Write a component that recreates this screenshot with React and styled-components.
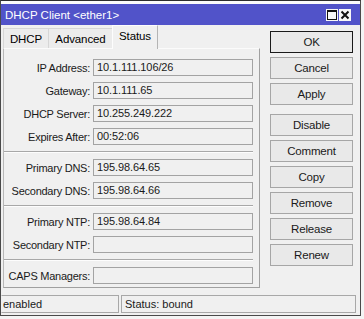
import React from "react";
import styled, { createGlobalStyle } from "styled-components";

const GlobalStyle = createGlobalStyle`
  body {
    margin: 0;
    background: #f4f4f4;
    font-family: "Liberation Sans", Arial, sans-serif;
  }
`;

const Window = styled.div`
  width: 361px;
  height: 316px;
  box-sizing: border-box;
  border: 1px solid #4a4a4a;
  border-top-color: #2e2e2e;
  background: #f0f0f0;
  display: flex;
  flex-direction: column;
  font-size: 11px;
  color: #000;
`;

const TopGap = styled.div`
  height: 3px;
  background: #fbfbfb;
`;

const TitleBar = styled.div`
  height: 21px;
  background: #5153c9;
  display: flex;
  align-items: center;
  padding: 0 9px 0 4px;
  color: #fff;
  font-size: 11.5px;
`;

const TitleText = styled.div`
  flex: 1;
  padding-top: 1px;
`;

const TitleButtons = styled.div`
  display: flex;
  gap: 1px;
`;

const TitleButton = styled.div`
  width: 12px;
  height: 12px;
  background: #f7f7f7;
  display: flex;
  align-items: center;
  justify-content: center;
`;

const Body = styled.div`
  display: flex;
  gap: 10px;
  padding: 0 7px 0 2px;
  height: 263px;
`;

const LeftColumn = styled.div`
  width: 257px;
  display: flex;
  flex-direction: column;
`;

const TabRow = styled.div`
  height: 23px;
  display: flex;
  align-items: flex-end;
`;

const Tab = styled.div`
  box-sizing: border-box;
  width: ${(p) => p.$w}px;
  height: ${(p) => (p.$active ? 24 : 20)}px;
  margin-bottom: ${(p) => (p.$active ? -1 : 0)}px;
  margin-left: ${(p) => (p.$first ? 0 : -1)}px;
  border: 1px solid ${(p) => (p.$active ? "#fdfdfd" : "#d6d6d6")};
  border-right-color: ${(p) => (p.$active ? "#b4b4b4" : "#d6d6d6")};
  border-bottom: none;
  background: ${(p) => (p.$active ? "#f0f0f0" : "#ececec")};
  display: flex;
  align-items: center;
  justify-content: center;
  padding-bottom: ${(p) => (p.$active ? 3 : 0)}px;
  font-size: 11.5px;
  letter-spacing: -0.1px;
  position: relative;
  z-index: ${(p) => (p.$active ? 1 : 0)};
`;

const Panel = styled.div`
  height: 240px;
  box-sizing: border-box;
  border: 1px solid #fbfbfb;
  border-right-color: #a0a0a0;
  border-bottom-color: #a0a0a0;
  border-left-color: #b8b8b8;
  padding: 10px 6px 0 0;
  display: flex;
  flex-direction: column;
  gap: 6px;
`;

const Row = styled.div`
  display: flex;
  align-items: center;
  height: 17px;
`;

const Label = styled.div`
  width: 86px;
  margin-right: 3px;
  text-align: right;
  white-space: nowrap;
  letter-spacing: -0.25px;
  color: #1a1a1a;
`;

const Field = styled.div`
  width: 160px;
  height: 17px;
  box-sizing: border-box;
  border: 1px solid #a3a3a3;
  background: #f0f0f0;
  padding-left: 3px;
  line-height: 15px;
  white-space: nowrap;
  letter-spacing: -0.1px;
  color: #1a1a1a;
`;

const Separator = styled.div`
  height: 0;
  border-top: 1px solid #a8a8a8;
  border-bottom: 1px solid #fdfdfd;
`;

const ButtonColumn = styled.div`
  width: 83px;
  padding-top: 6px;
  display: flex;
  flex-direction: column;
  gap: 4px;
`;

const Button = styled.button`
  height: 22px;
  box-sizing: border-box;
  width: 100%;
  margin: 0 0 ${(p) => (p.$spaced ? 5 : 0)}px;
  padding: 0;
  border: 1px solid ${(p) => (p.$default ? "#1a1a1a" : "#a6a6a6")};
  background: #e9e9e9;
  font-family: "Liberation Sans", Arial, sans-serif;
  font-size: 11.5px;
  letter-spacing: -0.2px;
  color: #1a1a1a;
`;

const StatusBar = styled.div`
  margin-top: 7px;
  height: 18px;
  display: flex;
  gap: 2px;
  padding-right: 4px;
`;

const StatusField = styled.div`
  width: ${(p) => p.$w}px;
  ${(p) => (p.$grow ? "flex: 1;" : "")}
  box-sizing: border-box;
  border: 1px solid #a8a8a8;
  border-left-color: ${(p) => (p.$first ? "#f0f0f0" : "#a8a8a8")};
  padding-left: ${(p) => (p.$first ? 1 : 3)}px;
  line-height: 16px;
  font-size: 11px;
  color: #1a1a1a;
`;

const fieldGroups = [
  [
    ["IP Address:", "10.1.111.106/26"],
    ["Gateway:", "10.1.111.65"],
    ["DHCP Server:", "10.255.249.222"],
    ["Expires After:", "00:52:06"],
  ],
  [
    ["Primary DNS:", "195.98.64.65"],
    ["Secondary DNS:", "195.98.64.66"],
  ],
  [
    ["Primary NTP:", "195.98.64.84"],
    ["Secondary NTP:", ""],
  ],
  [["CAPS Managers:", ""]],
];

const buttons = ["OK", "Cancel", "Apply", "Disable", "Comment", "Copy", "Remove", "Release", "Renew"];

const App = () => {
  return (
    <>
      <GlobalStyle />
      <Window>
        <TopGap />
        <TitleBar>
          <TitleText>DHCP Client &lt;ether1&gt;</TitleText>
          <TitleButtons>
            <TitleButton>
              <svg width="10" height="10" viewBox="0 0 10 10">
                <rect x="0.5" y="0.5" width="9" height="9" fill="none" stroke="#111" />
                <line x1="0" y1="1.5" x2="10" y2="1.5" stroke="#111" />
              </svg>
            </TitleButton>
            <TitleButton>
              <svg width="10" height="10" viewBox="0 0 10 10">
                <path d="M1.5 1.5 L8.5 8.5 M8.5 1.5 L1.5 8.5" stroke="#111" strokeWidth="2" />
              </svg>
            </TitleButton>
          </TitleButtons>
        </TitleBar>
        <Body>
          <LeftColumn>
            <TabRow>
              <Tab $first $w={46}>DHCP</Tab>
              <Tab $w={65}>Advanced</Tab>
              <Tab $active $w={46}>Status</Tab>
            </TabRow>
            <Panel>
              {fieldGroups.map((group, gi) => (
                <React.Fragment key={gi}>
                  {gi > 0 && <Separator />}
                  {group.map(([label, value]) => (
                    <Row key={label}>
                      <Label>{label}</Label>
                      <Field>{value}</Field>
                    </Row>
                  ))}
                </React.Fragment>
              ))}
            </Panel>
          </LeftColumn>
          <ButtonColumn>
            {buttons.map((b) => (
              <Button key={b} $default={b === "OK"} $spaced={b === "Apply"}>
                {b}
              </Button>
            ))}
          </ButtonColumn>
        </Body>
        <StatusBar>
          <StatusField $first $w={118}>enabled</StatusField>
          <StatusField $grow>Status: bound</StatusField>
        </StatusBar>
      </Window>
    </>
  );
};

export default App;
